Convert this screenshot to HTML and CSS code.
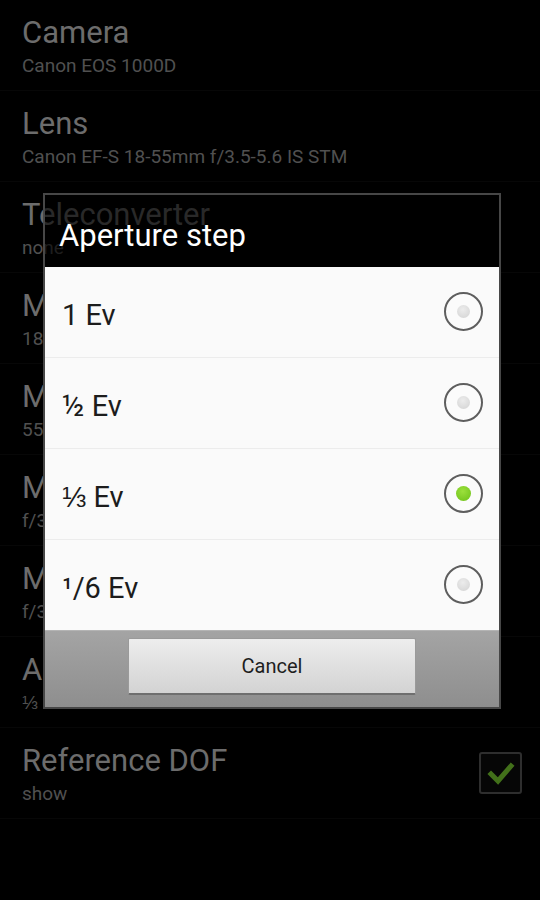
FILE: index.html
```html
<!DOCTYPE html>
<html>
<head>
    <title>Aperture step</title>
    <link rel="stylesheet" href="styles.css">
</head>
<body>
    <div class="screen">
        <ul class="prefs">
            <li class="pref">
                <div class="pref-text">
                    <div class="pref-title">Camera</div>
                    <div class="pref-summary">Canon EOS 1000D</div>
                </div>
            </li>
            <li class="pref">
                <div class="pref-text">
                    <div class="pref-title">Lens</div>
                    <div class="pref-summary">Canon EF-S 18-55mm f/3.5-5.6 IS STM</div>
                </div>
            </li>
            <li class="pref">
                <div class="pref-text">
                    <div class="pref-title">Teleconverter</div>
                    <div class="pref-summary">none</div>
                </div>
            </li>
            <li class="pref">
                <div class="pref-text">
                    <div class="pref-title">Minimum focal length</div>
                    <div class="pref-summary">18mm</div>
                </div>
            </li>
            <li class="pref">
                <div class="pref-text">
                    <div class="pref-title">Maximum focal length</div>
                    <div class="pref-summary">55mm</div>
                </div>
            </li>
            <li class="pref">
                <div class="pref-text">
                    <div class="pref-title">Maximum aperture</div>
                    <div class="pref-summary">f/3.5</div>
                </div>
            </li>
            <li class="pref">
                <div class="pref-text">
                    <div class="pref-title">Minimum aperture</div>
                    <div class="pref-summary">f/32</div>
                </div>
            </li>
            <li class="pref">
                <div class="pref-text">
                    <div class="pref-title">Aperture step</div>
                    <div class="pref-summary">⅓ Ev</div>
                </div>
            </li>
            <li class="pref">
                <div class="pref-text">
                    <div class="pref-title">Reference DOF</div>
                    <div class="pref-summary">show</div>
                </div>
                <div class="checkbox">
                    <svg width="39" height="38" viewBox="0 0 39 38">
                        <path d="M10 20 L17 27 L30 12" fill="none" stroke="#42701a" stroke-width="5" stroke-linecap="square"/>
                    </svg>
                </div>
            </li>
        </ul>

        <div class="dialog">
            <div class="dialog-title">Aperture step</div>
            <ul class="choices">
                <li class="choice">
                    <span class="choice-label">1 Ev</span>
                    <span class="radio"></span>
                </li>
                <li class="choice">
                    <span class="choice-label">½ Ev</span>
                    <span class="radio"></span>
                </li>
                <li class="choice">
                    <span class="choice-label">⅓ Ev</span>
                    <span class="radio checked"></span>
                </li>
                <li class="choice">
                    <span class="choice-label">¹/6 Ev</span>
                    <span class="radio"></span>
                </li>
            </ul>
            <div class="dialog-buttons">
                <button type="button" class="cancel-button">Cancel</button>
            </div>
        </div>
    </div>
</body>
</html>
```

FILE: styles.css
```css
body {
    margin: 0;
    background-color: #000;
    font-family: Roboto, "Liberation Sans", sans-serif;
}

.screen {
    position: relative;
    width: 540px;
    height: 900px;
    overflow: hidden;
    background-color: #000;
}

.prefs {
    list-style: none;
    margin: 0;
    padding: 0;
}

.pref {
    display: flex;
    align-items: center;
    height: 91px;
    box-sizing: border-box;
    padding: 0 18px 0 22px;
    border-bottom: 1px solid #070707;
}

.pref-text {
    flex: 1;
    margin-top: 2px;
}

.pref-title {
    font-size: 31px;
    line-height: 36px;
    color: #6c6c6c;
    white-space: nowrap;
}

.pref-summary {
    font-size: 19px;
    line-height: 24px;
    margin-top: 3px;
    color: #505050;
}

.checkbox {
    width: 39px;
    height: 38px;
    border: 2px solid #2e2e2e;
    border-radius: 3px;
    background-color: #060606;
}

.checkbox svg {
    display: block;
}

/* dialog sits over the list */
.dialog {
    position: absolute;
    top: 193px;
    left: 43px;
    width: 454px;
    border: 2px solid #474747;
    display: flex;
    flex-direction: column;
}

.dialog-title {
    height: 72px;
    box-sizing: border-box;
    padding: 23px 0 0 14px;
    font-size: 31px;
    line-height: 36px;
    color: #fff;
    background-color: rgba(0, 0, 0, 0.62);
}

.choices {
    list-style: none;
    margin: 0;
    padding: 0;
    background-color: #fafafa;
}

.choice {
    display: flex;
    align-items: center;
    justify-content: space-between;
    height: 90px;
    padding: 0 16px 0 17px;
    border-top: 1px solid #ececec;
}

.choice:first-child {
    border-top: none;
}

.choice-label {
    margin-top: 6px;
    font-size: 29px;
    color: #1c1c1c;
}

.radio {
    position: relative;
    width: 35px;
    height: 35px;
    margin-top: -2px;
    border: 2px solid #5e5e5e;
    border-radius: 50%;
    background-color: #fbfbfb;
}

.radio::after {
    content: "";
    position: absolute;
    top: 11px;
    left: 11px;
    width: 13px;
    height: 13px;
    border-radius: 50%;
    background: radial-gradient(circle at 45% 35%, #ececec, #d2d2d2);
}

.radio.checked::after {
    top: 10px;
    left: 10px;
    width: 15px;
    height: 15px;
    background: radial-gradient(circle at 45% 35%, #9be03c, #6cc018);
}

.dialog-buttons {
    display: flex;
    justify-content: center;
    height: 77px;
    box-sizing: border-box;
    padding-top: 7px;
    border-top: 1px solid #b4b4b4;
    background: linear-gradient(#a4a4a4, #8e8e8e);
}

.cancel-button {
    width: 288px;
    height: 57px;
    border: 1px solid #9a9a9a;
    border-bottom: 2px solid #6f6f6f;
    border-radius: 2px;
    background: linear-gradient(#ededed, #d3d3d3);
    font-family: Roboto, "Liberation Sans", sans-serif;
    font-size: 20px;
    color: #1e1e1e;
    cursor: pointer;
}
```
